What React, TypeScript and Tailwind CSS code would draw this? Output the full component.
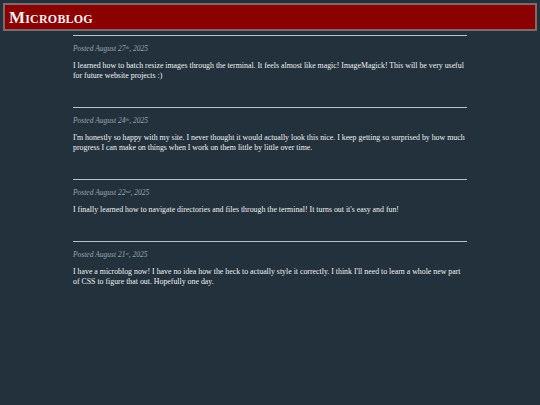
import React from 'react'

interface Post {
  day: string
  suffix: string
  text: string
}

const posts: Post[] = [
  {
    day: '27',
    suffix: 'th',
    text: 'I learned how to batch resize images through the terminal. It feels almost like magic! ImageMagick! This will be very useful for future website projects :)',
  },
  {
    day: '24',
    suffix: 'th',
    text: "I'm honestly so happy with my site. I never thought it would actually look this nice. I keep getting so surprised by how much progress I can make on things when I work on them little by little over time.",
  },
  {
    day: '22',
    suffix: 'nd',
    text: "I finally learned how to navigate directories and files through the terminal! It turns out it's easy and fun!",
  },
  {
    day: '21',
    suffix: 'st',
    text: "I have a microblog now! I have no idea how the heck to actually style it correctly. I think I'll need to learn a whole new part of CSS to figure that out. Hopefully one day.",
  },
]

export default function App() {
  return (
    <div className="min-h-[405px] bg-[#22313c] pt-[3px] px-[3px] font-['Liberation_Serif',serif]">
      {/* Header */}
      <header className="h-[28px] bg-[#8b0000] border-2 border-[#7d6a6a] flex items-center pl-[4px]">
        <h1 className="text-[17px] font-bold text-[#f4eeee] [font-variant:small-caps] leading-none tracking-[0.2px]">
          Microblog
        </h1>
      </header>

      {/* Posts */}
      <main className="w-[394px] mx-auto mt-[4px]">
        {posts.map((post) => (
          <article key={post.day} className="border-t border-[#b7c2ca] pt-[7px] pb-[26px]">
            <p className="text-[7.5px] italic text-[#9aa4ac] leading-[11px]">
              Posted August {post.day}
              <sup className="text-[5px]">{post.suffix}</sup>, 2025
            </p>
            <p className="mt-[7px] text-[7.85px] text-[#f0f1f2] leading-[10px]">{post.text}</p>
          </article>
        ))}
      </main>
    </div>
  )
}
